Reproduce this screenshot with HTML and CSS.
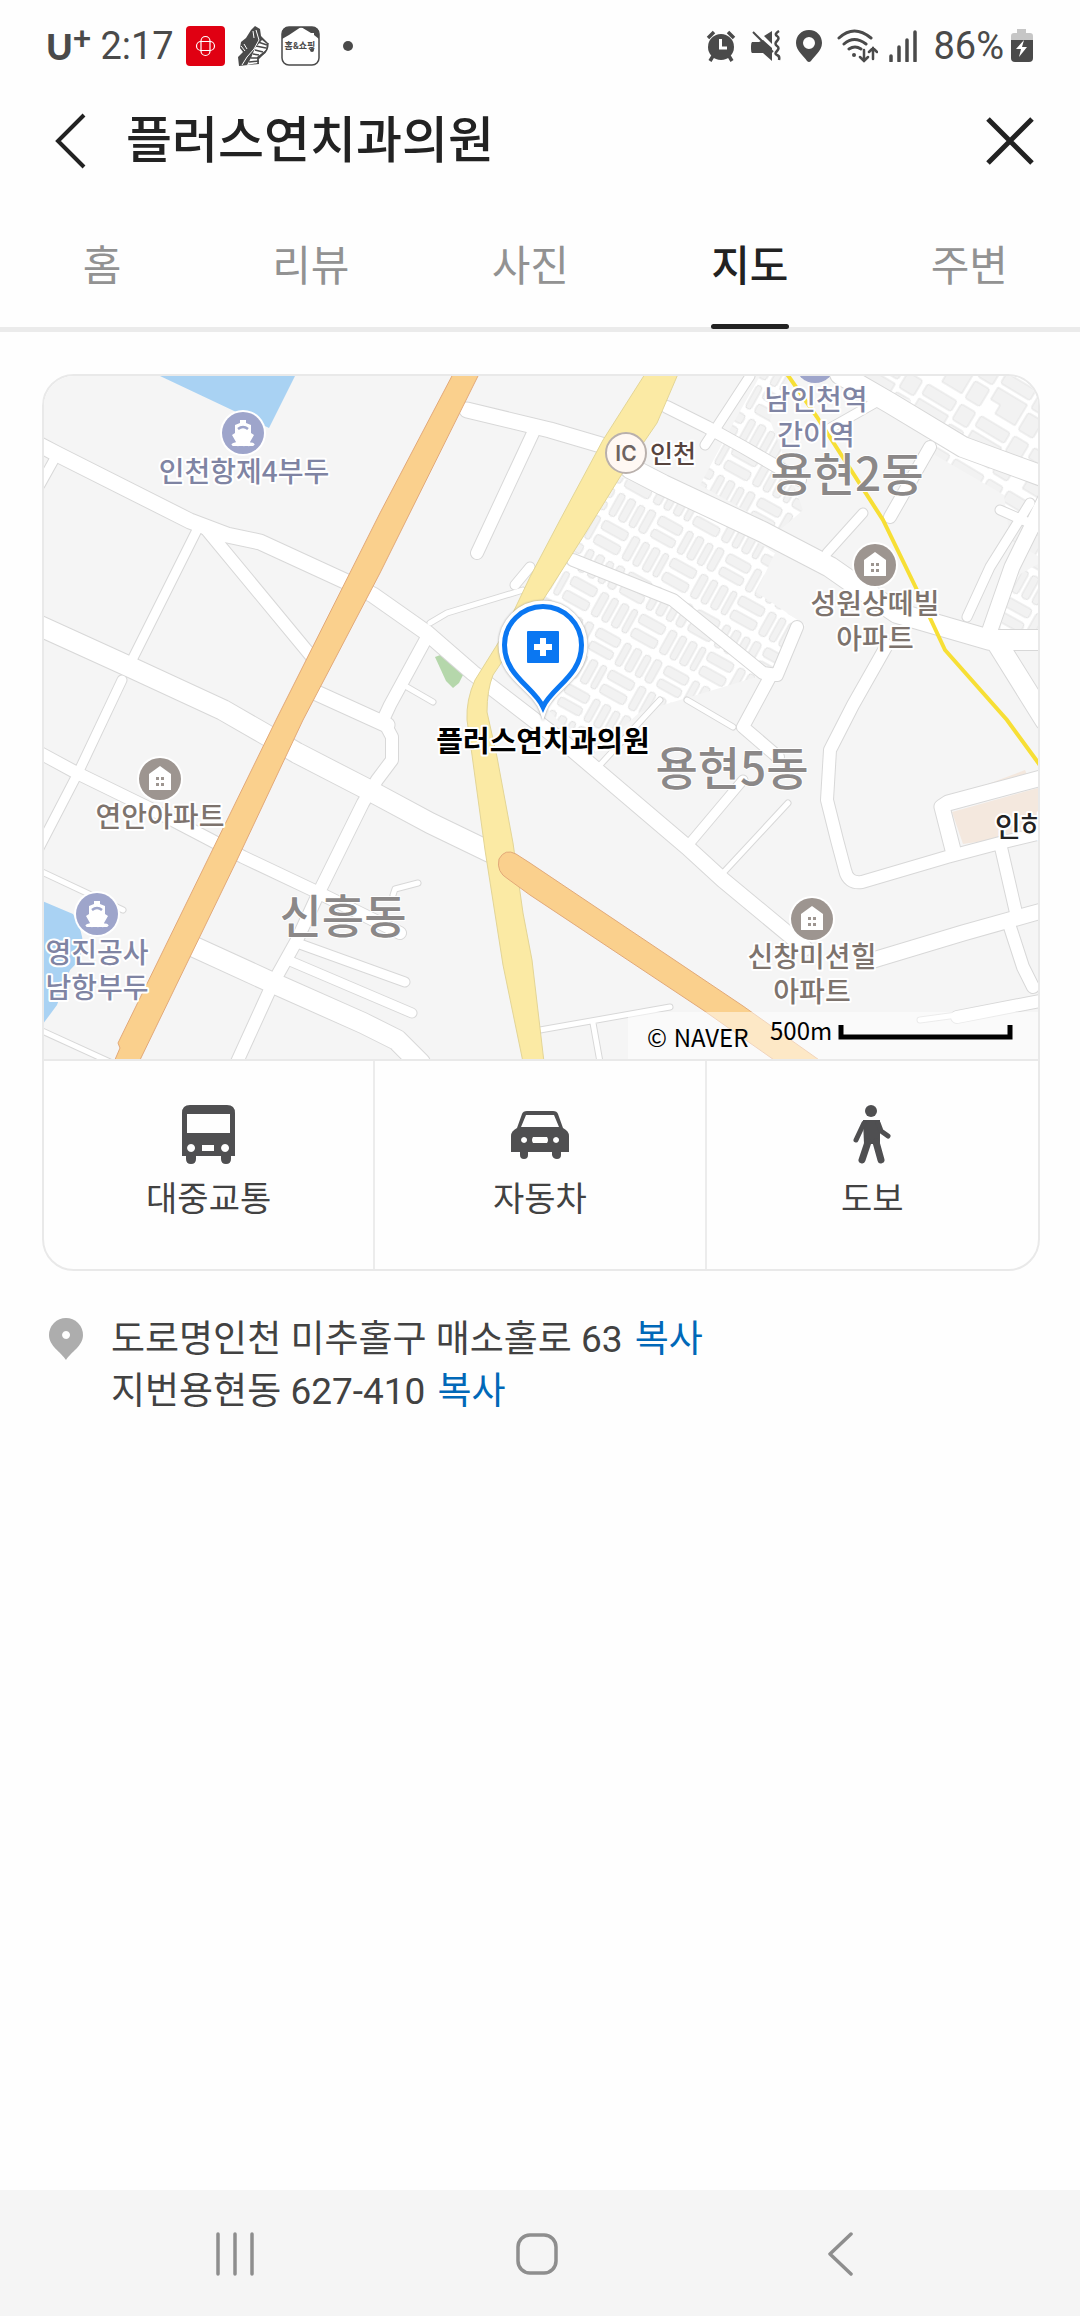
FILE: index.html
```html
<!DOCTYPE html>
<html lang="ko">
<head>
    <meta charset="utf-8">
    <meta name="viewport" content="width=device-width, initial-scale=1">
    <title>플러스연치과의원</title>
    <link rel="stylesheet" href="styles.css">
</head>
<body>

    <div class="status-bar">
        <div class="status-left">
            <span class="carrier">U<sup>+</sup></span>
            <span class="clock">2:17</span>
            <svg class="app-icon" width="39" height="40" viewBox="0 0 39 40">
                <rect width="39" height="40" rx="4" fill="#e00012"/>
                <g fill="none" stroke="#fff" stroke-width="1.2">
                    <rect x="15" y="10.500" width="9" height="19" rx="4.500"/>
                    <rect x="10.500" y="15.500" width="18" height="9" rx="4.500"/>
                </g>
            </svg>
            <svg class="app-icon" width="32" height="40" viewBox="0 0 32 40">
                <path d="M14 4l4-4 5 3 1 7 7 7-1 7-3 4-6 6 1 4-11 1-9 1-1-9 5-5-3-4 1-6 5-4z" fill="#4a4a4a"/>
                <path d="M25 14l5 4-1 6-9 7 1 6-11 2 4-7 4-10z" fill="#fff"/>
                <path d="M21 16l9 3M19 20l10 2M18 24l8 2M16 28l6 1M14 32l8 0M12 36l10-1" stroke="#4a4a4a" stroke-width="1.500" fill="none"/>
                <path d="M31 17q0 8-5 11l-5 4v6" stroke="#4a4a4a" stroke-width="1.500" fill="none"/>
                <path d="M19 4l3 10-5 9-7 8-5 8M4 20l4 5M7 18l3 5M16 5l1 7" stroke="#fff" stroke-width="1" fill="none"/>
            </svg>
            <svg class="app-icon" width="40" height="41" viewBox="0 0 40 41">
                <rect x="1" y="1" width="37" height="38" rx="7" fill="#fff" stroke="#4a4a4a" stroke-width="1.500"/>
                <path d="M1 13V8q0-7 7-7h23q7 0 7 7v5l-5-4V7h-3L20 1 8 9z" fill="#4a4a4a"/>
                <text class="app-icon-text" x="19" y="23">홈&amp;쇼핑</text>
                <circle cx="31" cy="24" r="2" fill="#4a4a4a"/>
            </svg>
            <span class="more-dot"></span>
        </div>
        <div class="status-right">
            <svg width="30" height="32" viewBox="0 0 30 32">
                <circle cx="15" cy="17" r="13" fill="#4a4a4a"/>
                <path d="M2 8l6-6M28 8l-6-6M7 26l-3 5M23 26l3 5" stroke="#4a4a4a" stroke-width="3.500"/>
                <path d="M14.500 9v9H21" fill="none" stroke="#fff" stroke-width="3"/>
            </svg>
            <svg width="30" height="32" viewBox="0 0 30 32">
                <path d="M1 12h7l4-2 9 8v13l-9-8H1q-1-1-1-4v-3q0-3 1-4zM13 6l8-5v13z" fill="#4a4a4a"/>
                <path d="M2 2l20 20" stroke="#4a4a4a" stroke-width="2"/>
                <path d="M28 1q-5 3-2 5t0 5 0 5 0 5 0 4 2 5" fill="none" stroke="#4a4a4a" stroke-width="2.500"/>
            </svg>
            <svg width="26" height="32" viewBox="0 0 26 32">
                <path fill-rule="evenodd" d="M13 0C5 0 0 6 0 13c0 8 9 14 11 18q2 2 4 0c2-4 11-10 11-18C26 6 21 0 13 0zm0 7a6 6 0 1 1 0 12 6 6 0 0 1 0-12z" fill="#4a4a4a"/>
            </svg>
            <svg width="41" height="34" viewBox="0 0 41 34">
                <g fill="none" stroke="#4a4a4a" stroke-width="3" stroke-linecap="round">
                    <path d="M2 9q15-14 32 0M7 15q10-9 22 0M12 20q6-4 12 0"/>
                    <path d="M27 21v11M23 28l4 4 4-4M36 30V19M32 23l4-4 4 4" stroke-width="2.500"/>
                </g>
                <circle cx="17" cy="26" r="2" fill="#4a4a4a"/>
            </svg>
            <svg class="signal" width="29" height="32" viewBox="0 0 29 32">
                <path d="M2 31v-5M10 31V17M18 31V10M26 31V2" stroke="#4a4a4a" stroke-width="3.500" stroke-linecap="round"/>
            </svg>
            <span class="battery-text">86%</span>
            <svg width="22" height="34" viewBox="0 0 22 34">
                <path d="M6 0h9v4h4q3 0 3 3v5H0V7q0-3 3-3h3z" fill="#c6c6c6"/>
                <path d="M0 11h22v18q0 4-4 4H4q-4 0-4-4z" fill="#4a4a4a"/>
                <path d="M13 11L5 20h5l-2 8 8-10h-5z" fill="#fff"/>
            </svg>
        </div>
    </div>

    <header class="page-header">
        <button class="icon-btn" aria-label="뒤로">
            <svg width="34" height="56" viewBox="0 0 34 56"><path d="M31 2L5 28l26 26" fill="none" stroke="#222" stroke-width="4"/></svg>
        </button>
        <h1>플러스연치과의원</h1>
        <button class="icon-btn" aria-label="닫기">
            <svg width="48" height="48" viewBox="0 0 48 48"><path d="M2 2l44 44M46 2L2 46" stroke="#222" stroke-width="5"/></svg>
        </button>
    </header>

    <nav class="tabs">
        <a href="#">홈</a>
        <a href="#">리뷰</a>
        <a href="#">사진</a>
        <a href="#" class="active">지도</a>
        <a href="#">주변</a>
    </nav>

    <main>
        <div class="map-card">
            <svg class="map" viewBox="44 376 994 683">
                <defs>
                    <path id="road20" d="M40 626L130 667 223 710 263 733 297 753 363 787 430 823 490 852M630 468L663 485 763 532 830 567 863 590 897 613 990 640H1045M840 374L890 403 963 447 1045 477M190 945L273 983 363 1023 397 1040 420 1063M997 643L1045 720"/>
                    <path id="road15" d="M40 445L57 454 190 521 227 535 260 542 347 582 373 595 427 633 473 673 573 750 687 847 723 880 805 948M467 410L550 430 635 455M953 850L942 807 948 803 1045 777M870 961L963 933 1045 910M310 690L387 725M990 630L1012 567 1045 500"/>
                    <path id="road12" d="M427 637L390 705 383 720 392 737 392 760 377 780 363 803 320 890 297 940 273 983 237 1062M40 753L77 773 163 815 207 838 243 857 317 892 400 933M207 530L312 657M667 407L707 427 743 447 800 480M887 645L853 705 830 750 827 800 837 840 845 870Q848 884 862 882L947 857 1000 843 1045 832M770 677L743 727 778 757M1000 843L1017 917M1010 927L1023 967 1033 987M957 1017L1045 1000M533 433L477 553M930 447L890 517M573 560L673 600 763 673 777 675 797 627"/>
                    <path id="road8" d="M197 530L133 658M122 680L78 773 38 850M55 458L40 485M297 943L405 982M290 961L412 1013M690 843L743 780M1030 503L990 567 967 617M863 513L827 553M750 376L705 445M827 430L880 400M1000 510L1045 530M530 567L515 585"/>
                    <path id="road5" d="M430 623L447 613 523 590M407 687L433 702M393 895L395 889 418 883M40 871L123 910M40 1030L110 1062M687 700L733 727M723 873L788 803M540 1030L670 1007M593 1023L600 1062M920 1020L957 1015M660 700L600 765"/>
                    <pattern id="blocks" width="78" height="64" patternUnits="userSpaceOnUse" patternTransform="rotate(29)">
                        <rect width="78" height="64" fill="#fff"/>
                        <g class="block">
                            <rect x="1" y="2" width="7" height="25" rx="3"/>
                            <rect x="12" y="2" width="8" height="25" rx="3"/>
                            <rect x="24" y="3" width="7" height="24" rx="3"/>
                            <rect x="35" y="2" width="8" height="25" rx="3"/>
                            <rect x="48" y="2" width="26" height="10" rx="3"/>
                            <rect x="48" y="17" width="26" height="9" rx="3"/>
                            <rect x="1" y="33" width="28" height="10" rx="3"/>
                            <rect x="1" y="49" width="28" height="10" rx="3"/>
                            <rect x="34" y="33" width="8" height="26" rx="3"/>
                            <rect x="46" y="33" width="7" height="26" rx="3"/>
                            <rect x="57" y="33" width="8" height="26" rx="3"/>
                            <rect x="69" y="33" width="6" height="26" rx="3"/>
                        </g>
                    </pattern>
                    <pattern id="lots" width="62" height="50" patternUnits="userSpaceOnUse" patternTransform="rotate(31)">
                        <rect width="62" height="50" fill="#fff"/>
                        <g class="block">
                            <rect x="1" y="1" width="34" height="12" rx="2"/>
                            <rect x="40" y="1" width="17" height="18" rx="2"/>
                            <path d="M1 18H35V42H12V32H1z"/>
                            <rect x="40" y="24" width="17" height="20" rx="2"/>
                        </g>
                    </pattern>
                    <g id="port">
                        <circle r="23" fill="#fff"/>
                        <circle r="21" fill="#9ea5cb"/>
                        <path d="M-3-13h6v3l5 2v8l3 2-4 7 4 4h-22l4-4-4-7 3-2v-8l5-2z" fill="#fff"/>
                        <path d="M-5-4q5-4 10 0" fill="none" stroke="#9ea5cb" stroke-width="2.500"/>
                        <path d="M-11 12q3-3 6 0 3-3 6 0 3-3 5 0 3-3 5 0" fill="none" stroke="#fff" stroke-width="2"/>
                    </g>
                    <g id="house">
                        <circle r="23" fill="#fff"/>
                        <circle r="21" fill="#9d9590"/>
                        <path d="M0-13L11-5V11H-11V-5z" fill="#fff"/>
                        <path d="M-4-2h3v3h-3zM1-2h3v3H1zM-4 4h3v3h-3zM1 4h3v3H1z" fill="#9d9590"/>
                    </g>
                </defs>

                <rect x="40" y="370" width="1004" height="695" fill="#f5f5f5"/>
                <path d="M160 376L232 410 269 428 295 376zM40 900L73 914Q94 950 70 970L57 1005 40 1028z" fill="#a9d2f3"/>
                <path d="M435 657L443 654 463 675 459 683 453 688 446 681z" fill="#b5d7ab"/>
                <path d="M952 812L1045 786V832L963 844zM948 799L1025 770 1030 782z" fill="#f4e8de"/>

                <!-- dense housing blocks -->
                <path d="M618 476L720 520 775 553 756 592 805 625 770 673 640 712 590 757 540 700 580 650 543 600z" fill="url(#blocks)"/>
                <path d="M760 376H790L770 420 803 510 780 530 700 485 735 420z" fill="url(#blocks)"/>
                <path d="M845 374H1045V560L1010 540 1004 495 935 455 910 400z" fill="url(#lots)"/>
                <path d="M1010 580L1045 560V632H1000z" fill="url(#blocks)"/>

                <g class="road-case">
                    <use href="#road20" stroke-width="22"/>
                    <use href="#road15" stroke-width="17"/>
                    <use href="#road12" stroke-width="14"/>
                    <use href="#road8" stroke-width="11"/>
                    <use href="#road5" stroke-width="7"/>
                </g>
                <g class="road-fill">
                    <use href="#road20" stroke-width="20"/>
                    <use href="#road15" stroke-width="15"/>
                    <use href="#road12" stroke-width="12"/>
                    <use href="#road8" stroke-width="9"/>
                    <use href="#road5" stroke-width="5"/>
                </g>

                <!-- trunk roads -->
                <path d="M645 374L603 440 560 520 530 577 500 640 475 680Q466 700 467 720L472 755 485 850 503 965 523 1062H544L532 960 523 913 513 843 497 757 487 712Q487 690 493 675L520 635 543 600 583 537 620 477 657 423 678 374z" fill="#fbeaa4" stroke="#e3d596" stroke-width="1"/>
                <path d="M453 374L380 513 277 718 118 1043 120 1048 114 1062H139L237 860 303 720 380 573 479 374z" fill="#fad08d" stroke="#e2a979" stroke-width="1"/>
                <path d="M516 854Q505 848 499 859 496 872 508 879L530 895 703 1010 777 1062H822L743 1006 530 863z" fill="#fad08d" stroke="#e2a979" stroke-width="1"/>
                <path d="M787 374L817 417 883 520 917 590 945 650 1007 720 1042 768" fill="none" stroke="#f7df35" stroke-width="4"/>

                <circle cx="815" cy="363" r="20" fill="#9ea5cb"/>
                <use href="#port" x="243" y="433"/>
                <use href="#port" x="97" y="914"/>
                <use href="#house" x="875" y="565"/>
                <use href="#house" x="160" y="779"/>
                <use href="#house" x="812" y="919"/>

                <g class="label port-label">
                    <text x="244" y="482">인천항제4부두</text>
                    <text x="97" y="963">영진공사</text>
                    <text x="97" y="998">남항부두</text>
                    <text x="816" y="410">남인천역</text>
                    <text x="816" y="445">간이역</text>
                </g>
                <g class="label apt-label">
                    <text x="875" y="614">성원상떼빌</text>
                    <text x="875" y="649">아파트</text>
                    <text x="160" y="827">연안아파트</text>
                    <text x="812" y="967">신창미션힐</text>
                    <text x="812" y="1002">아파트</text>
                </g>
                <g class="label district-label">
                    <text x="847" y="491">용현2동</text>
                    <text x="732" y="785">용현5동</text>
                    <text x="343" y="933">신흥동</text>
                </g>

                <circle cx="626" cy="453" r="20" fill="#fff8f3" stroke="#b9b0ac" stroke-width="2"/>
                <text class="ic-text" x="626" y="461">IC</text>
                <text class="label ic-label" x="650" y="463">인천</text>
                <text class="label campus-label" x="995" y="837">인하</text>

                <!-- place marker -->
                <g class="marker">
                    <path class="marker-halo" d="M543 710C535 687 502 678 502 645a41 41 0 0 1 82 0C584 678 551 687 543 710z"/>
                    <path d="M543 707C534 687 504.500 676 504.500 645a38.500 38.500 0 0 1 77 0C581.500 676 552 687 543 707z" fill="#fff" stroke="#0a77f2" stroke-width="5"/>
                    <rect x="527" y="631" width="32" height="32" rx="1" fill="#0a77f2"/>
                    <path d="M543 638v18M534 647h18" stroke="#fff" stroke-width="6"/>
                </g>
                <text class="label place-label" x="543" y="752">플러스연치과의원</text>

                <rect x="628" y="1012" width="412" height="50" fill="#fff" opacity="0.5"/>
                <text class="map-credit" x="647" y="1047">© NAVER</text>
                <text class="map-credit" x="770" y="1040">500m</text>
                <path d="M841 1025v12h169v-12" fill="none" stroke="#000" stroke-width="5"/>
            </svg>

            <div class="routes">
                <button>
                    <svg width="54" height="60" viewBox="0 0 54 60">
                        <path fill-rule="evenodd" d="M8 1h37q8 0 8 8v43h-4v3q0 5-5 5t-5-5v-3H14v3q0 5-5 5t-5-5v-3H0V9q0-8 8-8zM5 10v19h43V10zM9 40a4 4 0 1 0 .1 0zM43 40a4 4 0 1 0 .1 0zM20 41v6h12v-6z"/>
                    </svg>
                    <span>대중교통</span>
                </button>
                <button>
                    <svg width="58" height="60" viewBox="0 0 58 60">
                        <path fill-rule="evenodd" d="M16 7h26q4 0 5 3l5 14q6 3 6 8v16h-8v3q0 4-4 4t-5-4v-3H17v3q0 4-4 4t-4-4v-3H0V32q0-5 6-8l5-14q1-3 5-3zM15 11l-5 12h38l-5-12zM13 33a3 3 0 1 0 .1 0zM45 33a3 3 0 1 0 .1 0zM22 33q-2 3 0 6h14q2-3 0-6z"/>
                    </svg>
                    <span>자동차</span>
                </button>
                <button>
                    <svg class="walker" width="40" height="60" viewBox="0 0 40 60">
                        <circle cx="19" cy="7" r="6"/>
                        <path d="M11 16h17v24H12z"/>
                        <path class="arm" d="M12 19L4 36M26 19l3 8 7 5"/>
                        <path class="leg" d="M16 38l-6 18M24 38l5 18"/>
                    </svg>
                    <span>도보</span>
                </button>
            </div>
        </div>

        <div class="address">
            <svg width="34" height="42" viewBox="0 0 34 42">
                <path fill-rule="evenodd" d="M17 0a17 17 0 0 1 17 17c0 11-12 17-17 25C12 34 0 28 0 17A17 17 0 0 1 17 0zm0 13a4 4 0 1 0 .1 0z" fill="#adadad"/>
            </svg>
            <div class="address-lines">
                <p>도로명인천 미추홀구 매소홀로 63 <button>복사</button></p>
                <p>지번용현동 627-410 <button>복사</button></p>
            </div>
        </div>
    </main>

    <footer class="system-nav">
        <button aria-label="최근 앱">
            <svg width="42" height="44" viewBox="0 0 42 44"><path d="M4 2v40M21 2v40M38 2v40"/></svg>
        </button>
        <button aria-label="홈 화면">
            <svg width="42" height="44" viewBox="0 0 42 44"><rect x="2" y="3" width="38" height="38" rx="12"/></svg>
        </button>
        <button aria-label="이전">
            <svg width="42" height="44" viewBox="0 0 42 44"><path d="M32 2L11 22l21 20"/></svg>
        </button>
    </footer>

</body>
</html>
```
FILE: styles.css
```css
* { box-sizing: border-box; }
body {
    margin: 0;
    min-height: 100vh;
    display: flex;
    flex-direction: column;
    background: #fefefe;
    color: #424242;
    font-family: Roboto, "Noto Sans CJK KR", sans-serif;
}
button {
    padding: 0;
    border: none;
    background: none;
    color: inherit;
    font: inherit;
    cursor: pointer;
}
svg { display: block; }

.status-bar {
    display: flex;
    justify-content: space-between;
    align-items: center;
    height: 88px;
    padding: 4px 47px 0 46px;
    color: #4a4a4a;
    font-size: 38px;
}
.status-left,
.status-right {
    display: flex;
    align-items: center;
    gap: 12px;
}
.status-right { gap: 15px; }
.carrier {
    margin-right: -3px;
    font-family: Lato, sans-serif;
    font-weight: 900;
    font-size: 36px;
    line-height: 40px;
}
.carrier sup {
    font-size: 32px;
    line-height: 0;
    vertical-align: 10px;
}
.app-icon-text {
    font-size: 9px;
    font-weight: bold;
    text-anchor: middle;
    fill: #4a4a4a;
}
.more-dot {
    width: 10px;
    height: 10px;
    margin-left: 10px;
    border-radius: 50%;
    background: #4a4a4a;
}
.signal { margin-left: -4px; }
.battery-text { margin-right: -8px; }

.page-header {
    display: flex;
    align-items: center;
    height: 106px;
    padding: 0 46px 0 53px;
}
.page-header h1 {
    flex: 1;
    margin: 0 0 0 39px;
    color: #222;
    font-size: 50px;
    font-weight: 500;
    line-height: 72px;
}

.tabs {
    display: flex;
    justify-content: space-between;
    height: 138px;
    padding: 0 72px 0 74px;
    border-bottom: 5px solid #ebebeb;
}
.tabs a {
    position: relative;
    min-width: 56px;
    padding-top: 42px;
    color: #929292;
    font-size: 42px;
    line-height: 62px;
    text-align: center;
    text-decoration: none;
}
.tabs a.active {
    color: #222;
    font-weight: 500;
}
.tabs a.active::after {
    content: "";
    position: absolute;
    left: 0;
    right: 0;
    bottom: -2px;
    height: 5px;
    border-radius: 3px;
    background: #222;
}

main { flex: 1; }
.map-card {
    margin: 42px 40px 0 42px;
    border: 2px solid #e9e9e9;
    border-radius: 32px;
    overflow: hidden;
}
.map {
    width: 100%;
    height: auto;
}
.block {
    fill: #f2f2f2;
    stroke: #e2e2e2;
    stroke-width: 1;
}
.road-case,
.road-fill {
    fill: none;
    stroke: #d8d8d8;
    stroke-linecap: round;
    stroke-linejoin: round;
}
.road-fill { stroke: #fff; }

.label {
    font-family: "Noto Sans CJK KR", sans-serif;
    font-size: 28px;
    font-weight: 500;
    text-anchor: middle;
    stroke: #fff;
    stroke-width: 4px;
    stroke-linejoin: round;
    paint-order: stroke;
}
.port-label { fill: #7f84a3; }
.apt-label { fill: #7d736d; }
.district-label {
    fill: #8b8888;
    font-size: 46px;
    stroke-width: 2px;
}
.ic-text {
    fill: #6e6461;
    font-family: Inter, sans-serif;
    font-size: 21px;
    font-weight: 600;
    text-anchor: middle;
}
.ic-label {
    fill: #57443e;
    font-size: 25px;
    text-anchor: start;
}
.campus-label {
    fill: #222;
    text-anchor: start;
}
.place-label {
    fill: #000;
    font-size: 29px;
    font-weight: 700;
}
.marker-halo {
    fill: #fff;
    stroke: #fff;
    stroke-width: 7;
    filter: drop-shadow(0 0 1px #999);
}
.map-credit {
    fill: #000;
    font-family: "Noto Sans CJK KR", sans-serif;
    font-size: 24px;
}

.routes {
    display: grid;
    grid-template-columns: repeat(3, 1fr);
    border-top: 2px solid #e9e9e9;
}
.routes button {
    display: flex;
    flex-direction: column;
    align-items: center;
    gap: 10px;
    height: 208px;
    padding-top: 43px;
    border-right: 2px solid #ececec;
    font-size: 34px;
    line-height: 50px;
}
.routes button:last-child { border-right: none; }
.routes svg { fill: #4f4f51; }
.walker .arm,
.walker .leg {
    fill: none;
    stroke: #4f4f51;
    stroke-width: 5;
    stroke-linecap: round;
    stroke-linejoin: round;
}
.walker .leg { stroke-width: 7; }

.address {
    display: flex;
    gap: 28px;
    padding: 43px 49px;
}
.address svg {
    flex: none;
    margin-top: 4px;
}
.address p {
    margin: 0;
    font-size: 37px;
    line-height: 52px;
}
.address button {
    margin-left: 3px;
    color: #0068b8;
}

.system-nav {
    display: grid;
    grid-template-columns: repeat(3, 1fr);
    height: 126px;
    padding: 2px 89px 0 84px;
    background: #f5f5f5;
}
.system-nav button {
    display: flex;
    justify-content: center;
    align-items: center;
}
.system-nav svg {
    fill: none;
    stroke: #8e8e8e;
    stroke-width: 3.500;
    stroke-linecap: round;
    stroke-linejoin: round;
}
```
